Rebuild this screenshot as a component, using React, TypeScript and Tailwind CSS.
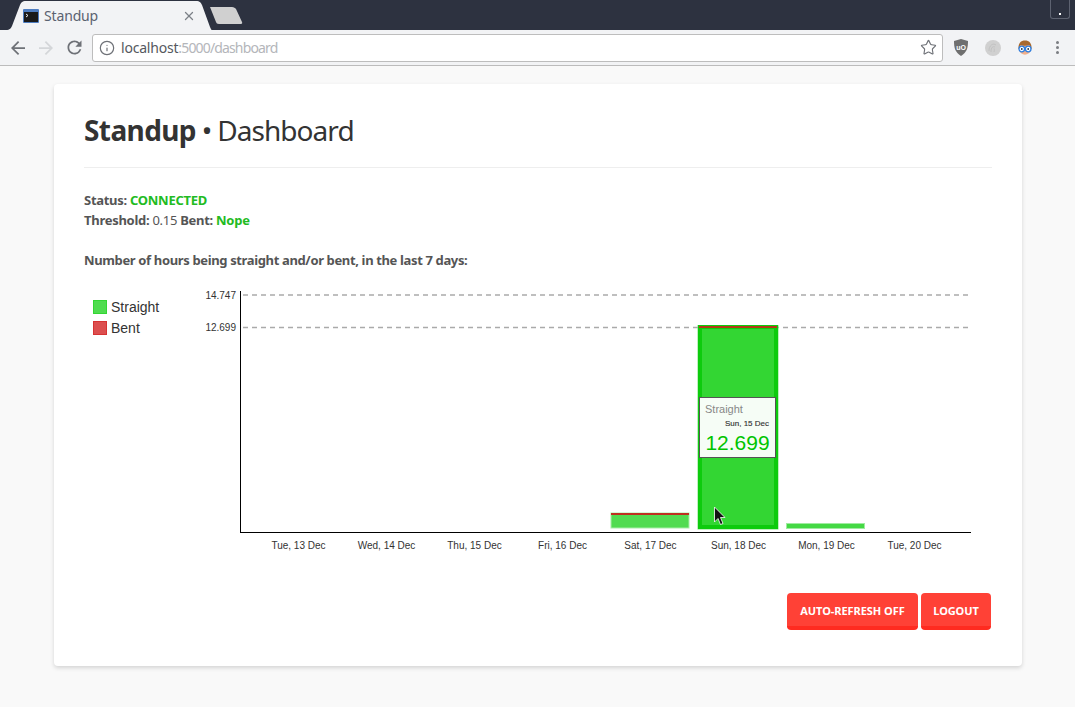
import React from "react";
import { Info, Star, X } from "lucide-react";

const SANS = "[font-family:'Noto_Sans','Open_Sans',sans-serif]";

function TabBar() {
  return (
    <div className="h-[30px] bg-[#2d3240] flex items-end relative">
      <div className="relative ml-[6px] w-[206px] h-[29px] flex items-center pl-[17px] pr-[16px]">
        <svg className="absolute inset-0" width="206" height="29" viewBox="0 0 206 29">
          <path d="M0 29 C4 29 5 27 6 25 L14 4 C15 2 16 0 20 0 L190 0 C194 0 195 2 196 4 L204 26 C205 28 205 29 206 29 Z" fill="#f2f3f5" />
        </svg>
        <svg className="relative shrink-0" width="16" height="14" viewBox="0 0 16 14">
          <rect x="0" y="0" width="16" height="14" fill="#4d7cc0" rx="1" />
          <rect x="1" y="3" width="14" height="10" fill="#1a1a1a" />
          <path d="M3 5l2 1.500-2 1.500" stroke="#fff" strokeWidth="0.900" fill="none" />
        </svg>
        <span className={`relative ml-[5px] text-[14px] text-[#5a6270] flex-1 ${SANS} tracking-[-0.15px]`}>Standup</span>
        <X className="relative text-[#7c8087]" size={14} strokeWidth={2.2} />
      </div>
      <svg className="ml-[-3px] mb-[6px]" width="34" height="17" viewBox="0 0 34 17">
        <path d="M1 0 L23 0 C25 0 26 1 27 2 L33 15 C33.500 16 33 17 32 17 L10 17 C8 17 7.500 16 7 15 Z" fill="#d0d0d0" />
      </svg>
      <div className="absolute top-0 right-[5px] w-[20px] h-[19px] border border-t-0 border-[#5d6270] rounded-b-[3px] flex items-end justify-center pb-[3px]">
        <div className="w-[2px] h-[2px] bg-white" />
      </div>
    </div>
  );
}

function UBlock() {
  return (
    <svg width="16" height="17" viewBox="0 0 16 17">
      <path d="M8 0 L15 2 C15 9 14 13 8 17 C2 13 1 9 1 2 Z" fill="#6f6f6f" />
      <text x="8" y="11" textAnchor="middle" fontSize="7" fontWeight="700" fill="#fff" fontFamily="Liberation Sans">uO</text>
    </svg>
  );
}

function Fingerprint() {
  return (
    <svg width="16" height="16" viewBox="0 0 16 16">
      <circle cx="8" cy="8" r="8" fill="#d0d0d0" />
      <path d="M4 11 C4 5 8 3 11 5 M6 12 C6 7 8 6 10 7 M9 12 C9.500 10 9.500 9 9 8.500" stroke="#c2c2c2" strokeWidth="1" fill="none" />
    </svg>
  );
}

function Avatar() {
  return (
    <svg width="16" height="16" viewBox="0 0 16 16">
      <path d="M1.500 9 C1 3 4 0.500 8 0.500 C12 0.500 15 3 14.500 9 Z" fill="#a8692f" />
      <path d="M2 9 C3 16.500 13 16.500 14 9 L12.500 5 C9 6 6 6 3.500 5 Z" fill="#f3b08a" />
      <circle cx="4.800" cy="9" r="2.800" fill="#fff" stroke="#2f7fe0" strokeWidth="1.300" />
      <circle cx="11.200" cy="9" r="2.800" fill="#fff" stroke="#2f7fe0" strokeWidth="1.300" />
      <circle cx="4.800" cy="9" r="0.900" fill="#234" />
      <circle cx="11.200" cy="9" r="0.900" fill="#234" />
    </svg>
  );
}

function Toolbar() {
  return (
    <div className="h-[36px] bg-[#f2f3f5] border-b border-[#bcbcbc] flex items-center">
      <div className="w-[92px] pl-[11px] flex items-center gap-[14px] shrink-0">
        <svg width="14" height="14" viewBox="0 0 16 16" fill="#6e7177">
          <path d="M16 7H3.800l5.600-5.600L8 0 0 8l8 8 1.400-1.400L3.800 9H16z" />
        </svg>
        <svg width="14" height="14" viewBox="0 0 16 16" fill="#d4d6d9">
          <path d="M0 7h12.200L6.600 1.400 8 0l8 8-8 8-1.400-1.400L12.200 9H0z" />
        </svg>
        <svg width="21" height="21" viewBox="0 0 24 24" fill="#6e7177" className="ml-[-3px]">
          <path d="M17.650 6.350A7.958 7.958 0 0 0 12 4c-4.420 0-7.990 3.580-7.990 8s3.570 8 7.990 8c3.730 0 6.840-2.550 7.730-6h-2.080A5.990 5.990 0 0 1 12 18c-3.310 0-6-2.690-6-6s2.690-6 6-6c1.660 0 3.140.690 4.220 1.780L13 11h7V4l-2.350 2.350z" />
        </svg>
      </div>
      <div className="w-[851px] h-[28px] bg-white border border-[#bdbdbd] rounded-[3px] flex items-center pl-[6px] pr-[5px] shrink-0">
        <Info size={16} strokeWidth={1.8} className="text-[#6e7177]" />
        <span className={`ml-[6px] text-[14px] flex-1 ${SANS}`}>
          <span className="text-[#55585e] tracking-[-0.2px]">localhost</span>
          <span className="text-[#b4b6ba] tracking-[-0.85px]">:5000/dashboard</span>
        </span>
        <Star size={17} strokeWidth={1.6} className="text-[#6e7177]" />
      </div>
      <div className="flex-1 flex items-center pl-[10px]">
        <div className="w-[16px] flex justify-center"><UBlock /></div>
        <div className="ml-[16px]"><Fingerprint /></div>
        <div className="ml-[16px]"><Avatar /></div>
        <div className="ml-[23px] flex flex-col gap-[2px]">
          <div className="w-[3px] h-[3px] rounded-full bg-[#7a7d82]" />
          <div className="w-[3px] h-[3px] rounded-full bg-[#7a7d82]" />
          <div className="w-[3px] h-[3px] rounded-full bg-[#7a7d82]" />
        </div>
      </div>
    </div>
  );
}

const DAYS = ["Tue, 13 Dec", "Wed, 14 Dec", "Thu, 15 Dec", "Fri, 16 Dec", "Sat, 17 Dec", "Sun, 18 Dec", "Mon, 19 Dec", "Tue, 20 Dec"];

function Chart() {
  return (
    <svg width="908" height="280" viewBox="84 285 908 280" className="block" fontFamily="'Liberation Sans', Arial, sans-serif">
      {/* legend */}
      <rect x="93.500" y="300.500" width="13" height="13" fill="#4fdc4f" stroke="#33d633" />
      <text x="111" y="312" fontSize="14" fill="#333">Straight</text>
      <rect x="93.500" y="321.500" width="13" height="13" fill="#dc4f4f" stroke="#d63333" />
      <text x="111" y="333" fontSize="14" fill="#333">Bent</text>

      {/* reference lines */}
      <line x1="243" y1="295" x2="971" y2="295" stroke="#aaa" strokeWidth="1.500" strokeDasharray="5 4" />
      <line x1="243" y1="327.500" x2="971" y2="327.500" stroke="#aaa" strokeWidth="1.500" strokeDasharray="5 4" />
      <text x="236" y="298.500" fontSize="10" textAnchor="end" fill="#333">14.747</text>
      <text x="236" y="331" fontSize="10" textAnchor="end" fill="#333">12.699</text>

      {/* Sat bar */}
      <rect x="611" y="513" width="78" height="15" fill="#51db51" stroke="#a9eda9" strokeWidth="1" />
      <rect x="611" y="513" width="78" height="2" fill="#c02d20" />
      {/* Sun bar */}
      <rect x="697.500" y="325" width="81" height="204.500" fill="#80e680" />
      <rect x="700" y="327" width="76" height="200" fill="#33d633" stroke="#0dcb0d" strokeWidth="4" />
      <rect x="699" y="326" width="78" height="2" fill="#b33a14" />
      {/* Mon bar */}
      <rect x="786.500" y="523.500" width="78" height="5" fill="#44d944" stroke="#a0eca0" strokeWidth="1" />

      {/* axes */}
      <line x1="240.500" y1="291" x2="240.500" y2="533" stroke="#000" strokeWidth="1" />
      <line x1="240" y1="532.500" x2="971" y2="532.500" stroke="#000" strokeWidth="1" />

      {DAYS.map((d, i) => (
        <text key={d} x={298.500 + i * 88} y="548.500" fontSize="10" textAnchor="middle" fill="#333">{d}</text>
      ))}

      {/* tooltip */}
      <rect x="699.500" y="397.500" width="76" height="60" fill="#f6fdf6" stroke="#555" strokeWidth="1" />
      <text x="705" y="413" fontSize="11" fill="#888">Straight</text>
      <text x="769" y="425.500" fontSize="8" textAnchor="end" fill="#333" stroke="#333" strokeWidth="0.150">Sun, 15 Dec</text>
      <text x="737.500" y="449.500" fontSize="21" textAnchor="middle" fill="#00c400">12.699</text>

      {/* pointer */}
      <path d="M714.500 507 L714.500 522 L718 518.500 L720.500 524.500 L723 523.500 L720.500 517.500 L725 517.500 Z" fill="#111" stroke="#fff" strokeWidth="0.800" />
    </svg>
  );
}

export default function App() {
  return (
    <div className={`w-[1075px] h-[707px] overflow-hidden bg-[#f9f9f9] flex flex-col ${SANS}`}>
      <TabBar />
      <Toolbar />
      <main className="ml-[54px] mt-[18px] w-[968px] h-[582px] bg-white rounded-[4px] shadow-[0_2px_4px_rgba(0,0,0,0.15)] px-[30px] pt-[25px] text-[#555]">
        <h1 className="text-[28px] leading-[42px] text-[#333] tracking-[-0.6px] border-b border-[#eee] pb-[15px] h-[59px]">
          <span className="font-bold">Standup</span><span className="ml-[-1px]"> • </span><span className="ml-[-1px] tracking-[-0.95px]">Dashboard</span>
        </h1>
        <p className="mt-[22px] text-[13px] leading-[20px] tracking-[-0.28px]">
          <b>Status:</b> <b className="text-[#22bb22]">CONNECTED</b><br />
          <b>Threshold:</b> 0.15 <b>Bent:</b> <b className="text-[#22bb22]">Nope</b>
        </p>
        <p className="mt-[20px] text-[13px] leading-[20px] tracking-[-0.36px] font-bold">
          Number of hours being straight and/or bent, in the last 7 days:
        </p>
        <div className="mt-[15px]"><Chart /></div>
        <div className="mt-[28px] flex justify-end gap-[3px] pr-[1px]">
          <button className="h-[37px] w-[131px] rounded-[4px] bg-[#ff4136] border-b-[4px] border-[#ff2b20] pt-[4px] text-white text-[11px] font-bold tracking-[-0.05px]">AUTO-REFRESH OFF</button>
          <button className="h-[37px] w-[70px] rounded-[4px] bg-[#ff4136] border-b-[4px] border-[#ff2b20] pt-[4px] text-white text-[11px] font-bold tracking-[-0.1px]">LOGOUT</button>
        </div>
      </main>
    </div>
  );
}
